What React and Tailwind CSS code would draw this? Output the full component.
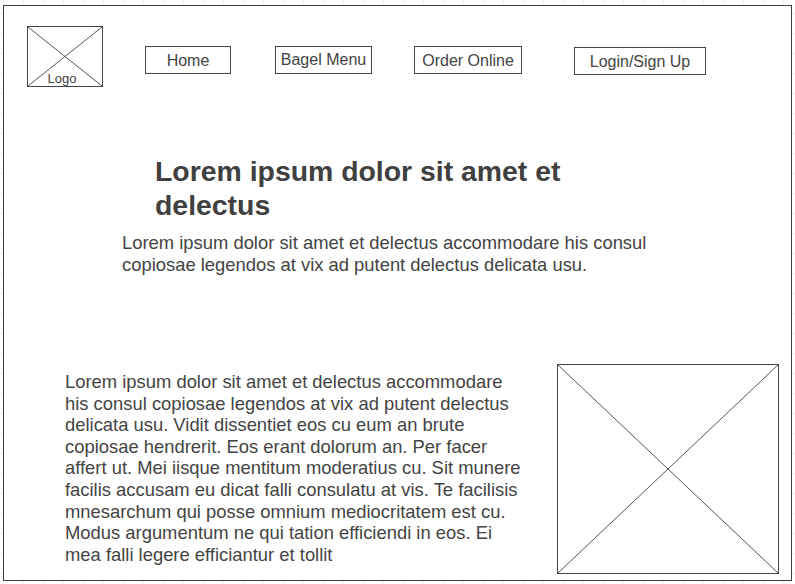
import React from "react";

const bodyLines = [
  "Lorem ipsum dolor sit amet et delectus accommodare",
  "his consul copiosae legendos at vix ad putent delectus",
  "delicata usu. Vidit dissentiet eos cu eum an brute",
  "copiosae hendrerit. Eos erant dolorum an. Per facer",
  "affert ut. Mei iisque mentitum moderatius cu. Sit munere",
  "facilis accusam eu dicat falli consulatu at vis. Te facilisis",
  "mnesarchum qui posse omnium mediocritatem est cu.",
  "Modus argumentum ne qui tation efficiendi in eos. Ei",
  "mea falli legere efficiantur et tollit",
];

function Cross() {
  return (
    <svg
      className="absolute inset-0 w-full h-full"
      viewBox="0 0 100 100"
      preserveAspectRatio="none"
    >
      <line x1="0" y1="0" x2="100" y2="100" stroke="#555" strokeWidth="1" vectorEffect="non-scaling-stroke" />
      <line x1="100" y1="0" x2="0" y2="100" stroke="#555" strokeWidth="1" vectorEffect="non-scaling-stroke" />
    </svg>
  );
}

function NavBox({ label, className }) {
  return (
    <div
      className={`h-[28px] border border-[#444] flex items-center justify-center text-[16px] leading-none text-[#444] ${className}`}
    >
      {label}
    </div>
  );
}

export default function App() {
  return (
    <div className="w-[795px] h-[584px] overflow-hidden bg-white bg-[image:linear-gradient(to_right,#ececec_1px,transparent_1px),linear-gradient(to_bottom,#ececec_1px,transparent_1px)] bg-[length:20px_20px] bg-[position:3px_13px] pt-[5px] pl-[3px] font-['Liberation_Sans',Arial,sans-serif]">
      <div className="w-[789px] h-[576px] bg-white border border-[#404040] flex flex-col">
        {/* Nav */}
        <div className="flex items-start pl-[23px] pt-[20px]">
          <div className="relative w-[76px] h-[61px] border border-[#444] shrink-0">
            <Cross />
            <span className="absolute left-0 right-[6px] bottom-[1px] text-center text-[13px] leading-none text-[#444]">
              Logo
            </span>
          </div>
          <NavBox label="Home" className="w-[86px] ml-[42px] mt-[20px] pt-[1px]" />
          <NavBox label="Bagel Menu" className="w-[97px] ml-[44px] mt-[20px] !items-start pt-[5px]" />
          <NavBox label="Order Online" className="w-[108px] ml-[42px] mt-[20px] pt-[1px]" />
          <NavBox label="Login/Sign Up" className="w-[132px] ml-[52px] mt-[21px] h-[27px] pt-[1px]" />
        </div>

        {/* Hero */}
        <h1 className="ml-[151px] mt-[67px] text-[28.4px] leading-[34px] font-bold text-[#404040]">
          Lorem ipsum dolor sit amet et
          <br />
          delectus
        </h1>
        <p className="ml-[118px] mt-[10px] text-[18.4px] leading-[22px] text-[#444]">
          Lorem ipsum dolor sit amet et delectus accommodare his consul
          <br />
          copiosae legendos at vix ad putent delectus delicata usu.
        </p>

        {/* Content */}
        <div className="flex items-start mt-auto mb-[6px] pl-[61px] pr-[12px]">
          <p className="mt-[7px] text-[18.4px] leading-[21.6px] text-[#444] whitespace-nowrap">
            {bodyLines.map((line, i) => (
              <React.Fragment key={i}>
                {line}
                {i < bodyLines.length - 1 && <br />}
              </React.Fragment>
            ))}
          </p>
          <div className="relative ml-auto w-[222px] h-[210px] border border-[#444] shrink-0">
            <Cross />
          </div>
        </div>
      </div>
    </div>
  );
}
